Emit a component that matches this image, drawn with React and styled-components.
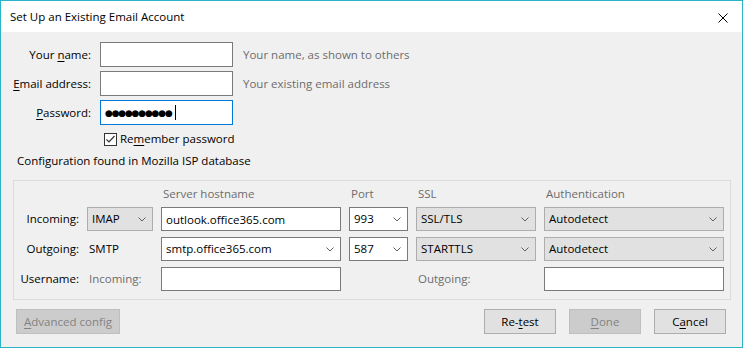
import React from "react";
import styled, { createGlobalStyle } from "styled-components";

const GlobalStyle = createGlobalStyle`
  html, body {
    margin: 0;
    padding: 0;
    background: #ffffff;
  }
  body {
    font-family: "Segoe UI", "Open Sans", "Noto Sans", sans-serif;
    font-size: 11.5px;
    color: #000;
  }
`;

const Window = styled.div`
  width: 741px;
  height: 346px;
  border: 1px solid #2bb4c8;
  background: #f0f0f0;
  display: flex;
  flex-direction: column;
`;

const TitleBar = styled.div`
  height: 31px;
  background: #fff;
  display: flex;
  align-items: center;
  justify-content: space-between;
  padding: 0 10px 0 9px;
`;

const Title = styled.span`
  font-size: 11.5px;
  line-height: 16px;
  margin-top: 1px;
`;

const Close = styled.svg`
  width: 10px;
  height: 10px;
  margin-right: 4px;
  margin-top: 2px;
`;

const Body = styled.div`
  flex: 1;
  display: flex;
  flex-direction: column;
  padding: 10px 16px 0 0;
`;

const AccountGrid = styled.div`
  display: grid;
  grid-template-columns: 90px 133px auto;
  column-gap: 9px;
  row-gap: 4px;
  align-items: center;
`;

const Label = styled.label`
  text-align: right;
  line-height: 16px;
`;

const Hint = styled.span`
  color: #6d6d6d;
  line-height: 16px;
  margin-left: 1px;
`;

const TextBox = styled.div`
  box-sizing: border-box;
  height: ${(p) => p.$h || 25}px;
  background: #fff;
  border: 1px solid ${(p) => (p.$focus ? "#0078d7" : "#7a7a7a")};
  display: flex;
  align-items: center;
  padding-left: 4px;
`;

const Dots = styled.span`
  font-size: 9px;
  letter-spacing: -1.2px;
  line-height: 10px;
  font-family: "DejaVu Sans", sans-serif;
`;

const Caret = styled.span`
  width: 1px;
  height: 15px;
  background: #000;
  margin-left: 3px;
`;

const CheckRow = styled.div`
  grid-column: 2 / 4;
  display: flex;
  align-items: center;
  gap: 3px;
  padding-left: 4px;
  margin-top: 2px;
  line-height: 16px;
`;

const Checkbox = styled.span`
  box-sizing: border-box;
  width: 13px;
  height: 13px;
  border: 1px solid #333;
  background: #fff;
  display: flex;
  align-items: center;
  justify-content: center;
`;

const Status = styled.div`
  margin: 6px 0 0 16px;
  line-height: 16px;
`;

const Fieldset = styled.div`
  margin: 11px 0 0 12px;
  width: 718px;
  box-sizing: border-box;
  border: 1px solid #dcdcdc;
  padding: 5px 6px 8px 0;
  display: grid;
  grid-template-columns: 65px 66px 180px 59px 120px 180px;
  column-gap: 8px;
  row-gap: 6px;
  align-items: center;
`;

const ColHead = styled.span`
  color: #6d6d6d;
  line-height: 16px;
  grid-column: ${(p) => p.$col};
  padding-left: 2px;
  margin-bottom: -1px;
`;

const RowLabel = styled.span`
  text-align: right;
  line-height: 16px;
`;

const Plain = styled.span`
  line-height: 16px;
  padding-left: 2px;
  color: ${(p) => (p.$dim ? "#6d6d6d" : "#000")};
`;

const Select = styled.div`
  box-sizing: border-box;
  height: 24px;
  background: ${(p) => (p.$white ? "#fff" : "#e1e1e1")};
  border: 1px solid ${(p) => (p.$white ? "#7a7a7a" : "#adadad")};
  display: flex;
  align-items: center;
  justify-content: space-between;
  padding: 0 6px 0 4px;
  line-height: 16px;
`;

const Chevron = () => (
  <svg width="8" height="5" viewBox="0 0 8 5">
    <path d="M0.5 0.5 L4 4 L7.5 0.5" fill="none" stroke="#606060" strokeWidth="1" />
  </svg>
);

const Footer = styled.div`
  display: flex;
  align-items: center;
  margin: 9px 0 0 15px;
`;

const Button = styled.div`
  box-sizing: border-box;
  width: ${(p) => p.$w || 72}px;
  height: 25px;
  display: flex;
  align-items: center;
  justify-content: center;
  background: ${(p) => (p.$disabled ? "#cccccc" : "#e1e1e1")};
  border: 1px solid ${(p) => (p.$disabled ? "#bfbfbf" : "#adadad")};
  color: ${(p) => (p.$disabled ? "#838383" : "#000")};
  margin-left: ${(p) => p.$gap || 0}px;
`;

const Spacer = styled.div`
  flex: 1;
`;

const U = styled.span`
  text-decoration: underline;
  text-underline-offset: 2px;
`;

export default function App() {
  return (
    <>
      <GlobalStyle />
      <Window>
        <TitleBar>
          <Title>Set Up an Existing Email Account</Title>
          <Close viewBox="0 0 10 10">
            <path d="M0.5 0.5 L9.5 9.5 M9.5 0.5 L0.5 9.5" stroke="#000" strokeWidth="1" />
          </Close>
        </TitleBar>
        <Body>
          <AccountGrid>
            <Label>
              Your <U>n</U>ame:
            </Label>
            <TextBox />
            <Hint>Your name, as shown to others</Hint>
            <Label>
              <U>E</U>mail address:
            </Label>
            <TextBox />
            <Hint>Your existing email address</Hint>
            <Label>
              <U>P</U>assword:
            </Label>
            <TextBox $focus>
              <Dots>●●●●●●●●●●</Dots>
              <Caret />
            </TextBox>
            <span />
            <CheckRow>
              <Checkbox>
                <svg width="11" height="11" viewBox="0 0 11 11">
                  <path d="M1.5 5.5 L4 8 L9.5 2" fill="none" stroke="#333" strokeWidth="1.2" />
                </svg>
              </Checkbox>
              <span>
                Re<U>m</U>ember password
              </span>
            </CheckRow>
          </AccountGrid>
          <Status>Configuration found in Mozilla ISP database</Status>
          <Fieldset>
            <ColHead $col={3}>Server hostname</ColHead>
            <ColHead $col={4}>Port</ColHead>
            <ColHead $col={5}>SSL</ColHead>
            <ColHead $col={6}>Authentication</ColHead>

            <RowLabel>Incoming:</RowLabel>
            <Select>
              IMAP
              <Chevron />
            </Select>
            <TextBox $h={24}>outlook.office365.com</TextBox>
            <Select $white>
              993
              <Chevron />
            </Select>
            <Select>
              SSL/TLS
              <Chevron />
            </Select>
            <Select>
              Autodetect
              <Chevron />
            </Select>

            <RowLabel>Outgoing:</RowLabel>
            <Plain>SMTP</Plain>
            <Select $white>
              smtp.office365.com
              <Chevron />
            </Select>
            <Select $white>
              587
              <Chevron />
            </Select>
            <Select>
              STARTTLS
              <Chevron />
            </Select>
            <Select>
              Autodetect
              <Chevron />
            </Select>

            <RowLabel>Username:</RowLabel>
            <Plain $dim>Incoming:</Plain>
            <TextBox $h={24} />
            <span />
            <Plain $dim>Outgoing:</Plain>
            <TextBox $h={24} />
          </Fieldset>
          <Footer>
            <Button $w={104} $disabled>
              <span>
                <U>A</U>dvanced config
              </span>
            </Button>
            <Spacer />
            <Button>
              <span>
                Re-<U>t</U>est
              </span>
            </Button>
            <Button $disabled $gap={13}>
              <U>D</U>one
            </Button>
            <Button $gap={13}>
              <span>
                C<U>a</U>ncel
              </span>
            </Button>
          </Footer>
        </Body>
      </Window>
    </>
  );
}
